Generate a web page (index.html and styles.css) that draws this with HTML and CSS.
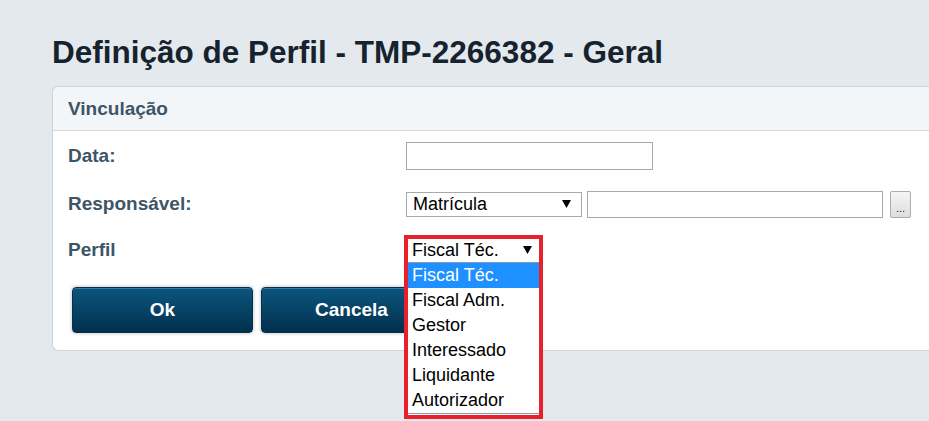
FILE: index.html
```html
<!DOCTYPE html>
<html lang="pt">

<head>
    <meta charset="UTF-8">
    <meta name="viewport" content="width=device-width, initial-scale=1.0">
    <title>Definição de Perfil</title>
    <link rel="stylesheet" href="styles.css">
</head>

<body>

    <h1 class="page-title">Definição de Perfil - TMP-2266382 - Geral</h1>

    <div class="panel">
        <div class="panel-header">Vinculação</div>

        <div class="panel-body">
            <div class="form-row">
                <label class="form-label">Data:</label>
                <div class="form-field">
                    <input type="text" class="text-input date-input">
                </div>
            </div>

            <div class="form-row">
                <label class="form-label">Responsável:</label>
                <div class="form-field">
                    <div class="fake-select key-select">
                        <span>Matrícula</span>
                        <svg class="arrow" width="9" height="8" viewBox="0 0 9 8"><polygon points="0,0 9,0 4.5,8" fill="#000"/></svg>
                    </div>
                    <input type="text" class="text-input key-input">
                    <button class="lookup-btn">...</button>
                </div>
            </div>

            <div class="form-row form-row-last">
                <label class="form-label">Perfil</label>
                <div class="form-field">
                    <div class="perfil-field">
                        <!-- open dropdown, marked with a red frame -->
                        <div class="dropdown">
                            <div class="dropdown-current">
                                <span>Fiscal Téc.</span>
                                <svg class="arrow" width="9" height="8" viewBox="0 0 9 8"><polygon points="0,0 9,0 4.5,8" fill="#000"/></svg>
                            </div>
                            <ul class="dropdown-list">
                                <li class="selected">Fiscal Téc.</li>
                                <li>Fiscal Adm.</li>
                                <li>Gestor</li>
                                <li>Interessado</li>
                                <li>Liquidante</li>
                                <li>Autorizador</li>
                            </ul>
                        </div>
                    </div>
                </div>
            </div>

            <div class="button-row">
                <button class="action-btn">Ok</button>
                <button class="action-btn">Cancela</button>
            </div>
        </div>
    </div>

</body>

</html>
```

FILE: styles.css
```css
/* Global Styles */
html {
    height: 100%;
}

body {
    box-sizing: border-box;
    min-height: 100%;
    font-family: 'Liberation Sans', Arial, sans-serif;
    background-color: #e3e9ed;
    margin: 0;
    padding: 34px 0 0 52px;
}

.page-title {
    margin: 0 0 16px;
    font-size: 31.5px;
    line-height: 36px;
    font-weight: bold;
    color: #16232e;
}

/* Panel */
.panel {
    background-color: #fff;
    border: 1px solid #cdd3d7;
    border-right: none;
    border-radius: 6px 0 0 6px;
}

.panel-header {
    height: 43px;
    line-height: 43px;
    padding-left: 15px;
    background-color: #f3f6f8;
    border-bottom: 1px solid #d3d8dc;
    border-radius: 6px 0 0 0;
    font-size: 19px;
    font-weight: bold;
    color: #3d5566;
}

.panel-body {
    padding: 1px 0 17px 15px;
}

/* Form rows */
.form-row {
    display: grid;
    grid-template-columns: 338px auto;
    align-items: center;
    height: 48px;
}

.form-row-last {
    height: 44px;
}

.form-label {
    font-size: 19px;
    font-weight: bold;
    color: #3d5566;
}

.form-field {
    display: flex;
    align-items: center;
}

.text-input {
    box-sizing: border-box;
    height: 28px;
    margin: 0;
    border: 1px solid #a9a9a9;
    background-color: #fff;
}

.date-input {
    width: 247px;
}

.key-input {
    width: 296px;
    height: 27px;
    margin-left: 5px;
}

.fake-select {
    box-sizing: border-box;
    display: flex;
    align-items: center;
    justify-content: space-between;
    width: 176px;
    height: 25px;
    padding: 0 10px 0 6px;
    border: 1px solid #a9a9a9;
    font-size: 18px;
    color: #000;
}

.lookup-btn {
    box-sizing: border-box;
    width: 21px;
    height: 27px;
    margin-left: 7px;
    padding: 8px 0 0;
    border: 1px solid #acacac;
    border-radius: 2px;
    background: linear-gradient(to bottom, #f5f5f5, #dddddd);
    font-family: 'Liberation Sans', Arial, sans-serif;
    font-size: 11px;
    line-height: 11px;
    color: #222;
}

/* Perfil dropdown */
.perfil-field {
    position: relative;
    width: 131px;
    height: 23px;
}

.dropdown {
    position: absolute;
    top: -4px;
    left: -2px;
    z-index: 2;
    box-sizing: border-box;
    width: 139px;
    height: 184px;
    border: 4px solid #e8202b;
    background-color: #fff;
    font-size: 18px;
    color: #000;
}

.dropdown-current {
    display: flex;
    align-items: center;
    justify-content: space-between;
    height: 23px;
    padding: 0 7px 0 4px;
}

.dropdown-list {
    list-style: none;
    margin: 0;
    padding: 0;
    border-top: 1px solid #7f9db9;
    border-bottom: 1px solid #8c99a8;
}

.dropdown-list li {
    height: 25px;
    line-height: 25px;
    padding-left: 4px;
}

.dropdown-list li.selected {
    background-color: #1e90ff;
    color: #fff;
}

/* Buttons */
.button-row {
    display: flex;
    gap: 8px;
    margin-top: 15px;
    padding-left: 4px;
}

.action-btn {
    box-sizing: border-box;
    width: 181px;
    height: 46px;
    border: 1px solid #06314e;
    border-radius: 4px;
    background: linear-gradient(to bottom, #0b557e, #02304e);
    box-shadow: inset 0 1px 0 #3a7aa0, 0 0 3px 1px rgba(0, 0, 0, 0.18);
    font-family: 'Liberation Sans', Arial, sans-serif;
    font-size: 19px;
    font-weight: bold;
    color: #fff;
    cursor: pointer;
}
```
